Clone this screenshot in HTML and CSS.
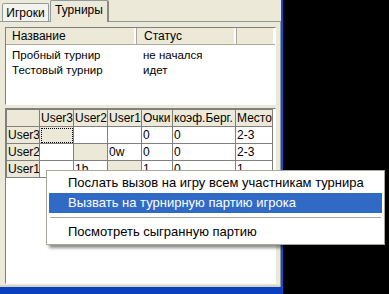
FILE: index.html
```html
<!DOCTYPE html>
<html lang="ru">
<head>
  <meta charset="UTF-8">
  <title>Турниры</title>
  <link rel="stylesheet" href="styles.css">
</head>
<body>
  <div class="window">
    <div class="tabs">
      <span class="tab">Игроки</span>
      <span class="tab active">Турниры</span>
    </div>
    <div class="panel">
      <div class="list">
        <div class="list-head">
          <span class="col-name">Название</span>
          <span class="col-status">Статус</span>
          <span class="col-rest"></span>
        </div>
        <div class="list-row"><span class="col-name">Пробный турнир</span><span class="col-status">не начался</span></div>
        <div class="list-row"><span class="col-name">Тестовый турнир</span><span class="col-status">идет</span></div>
      </div>
      <div class="grid-box">
        <table class="grid">
          <colgroup>
            <col class="w-head"><col class="w-user"><col class="w-user"><col class="w-user">
            <col class="w-score"><col class="w-berg"><col class="w-place">
          </colgroup>
          <tr>
            <th class="corner"></th>
            <th>User3</th><th>User2</th><th>User1</th><th>Очки</th><th>коэф.Берг.</th><th>Место</th>
          </tr>
          <tr>
            <th>User3</th>
            <td class="self focus"></td><td></td><td></td><td>0</td><td>0</td><td>2-3</td>
          </tr>
          <tr>
            <th>User2</th>
            <td></td><td class="self"></td><td>0w</td><td>0</td><td>0</td><td>2-3</td>
          </tr>
          <tr>
            <th>User1</th>
            <td></td><td>1b</td><td class="self"></td><td>1</td><td>0</td><td>1</td>
          </tr>
        </table>
      </div>
    </div>
  </div>
  <div class="menu">
    <div class="item">Послать вызов на игру всем участникам турнира</div>
    <div class="item selected">Вызвать на турнирную партию игрока</div>
    <div class="sep"></div>
    <div class="item">Посмотреть сыгранную партию</div>
  </div>
</body>
</html>
```

FILE: styles.css
```css
body{
  margin: 0;
  width: 389px;
  height: 294px;
  background-color: #000;
  font-family: "Liberation Sans", Arial, sans-serif;
  font-size: 12px;
  overflow: hidden;
  position: relative;
}
.window{
  width: 281px;
  height: 287px;
  background-color: #ECE9D8;
  border-right: 2px solid #0A4FD6;
  border-bottom: 7px solid #0A3FC0;
  box-shadow: inset 0 -2px #D6D2C2;
  display: flex;
  flex-direction: column;
}
/* вкладки */
.tabs{
  display: flex;
  align-items: flex-end;
  height: 21px;
  padding-left: 2px;
  gap: 1px;
}
.tab{
  width: 45px;
  height: 17px;
  border: 1px solid #919B9C;
  border-bottom: none;
  border-radius: 2px 2px 0 0;
  background-color: #F4F3EE;
  line-height: 18px;
  text-align: center;
  color: #000;
}
.tab.active{
  width: 56px;
  height: 21px;
  line-height: 19px;
  background-color: #ECE9D8;
  border-right: 2px solid #8A8A80;
  margin-bottom: -1px;
  position: relative;
}
.panel{
  flex: 1;
  border-top: 1px solid #919B9C;
  border-right: 1px solid #919B9C;
  padding: 5px 3px 3px 5px;
  display: flex;
  flex-direction: column;
  gap: 3px;
}
/* список турниров */
.list{
  height: 76px;
  background-color: #fff;
  border: 1px solid #808080;
  border-right-color: #fff;
  border-bottom-color: #fff;
  margin-right: 1px;
}
.list-head{
  display: flex;
  height: 16px;
  background-color: #ECE9D8;
  border-bottom: 1px solid #ACA899;
  line-height: 16px;
}
.list-head span{
  border-right: 1px solid #ACA899;
  box-shadow: inset -2px 0 #fff;
}
.list-head .col-rest{
  flex: 1;
  border-right: none;
}
.col-name{
  width: 124px;
  padding-left: 6px;
}
.col-status{
  width: 92px;
  padding-left: 7px;
}
.list-row{
  display: flex;
  height: 15px;
  line-height: 15px;
  font-size: 11.5px;
}
.list-head + .list-row{
  margin-top: 3px;
}
/* таблица */
.grid-box{
  flex: 1;
  background-color: #fff;
  border: 1px solid #808080;
  border-right-color: #fff;
  border-bottom-color: #fff;
  margin-right: 1px;
}
.grid{
  border-collapse: collapse;
  table-layout: fixed;
  width: 266px;
  font-size: 12px;
}
.w-head{ width: 33px; }
.w-user{ width: 34px; }
.w-score{ width: 31px; }
.w-berg{ width: 63px; }
.w-place{ width: 37px; }
.grid th, .grid td{
  height: 16px;
  padding: 0 1px;
  border: 1px solid #808080;
  text-align: left;
  font-weight: normal;
  white-space: nowrap;
  overflow: hidden;
}
.grid th{
  background-color: #ECE9D8;
}
.grid td.self{
  background-color: #ECE9D8;
}
.grid td.focus{
  outline: 1px dotted #000;
  outline-offset: -2px;
}
/* контекстное меню */
.menu{
  position: absolute;
  left: 46px;
  top: 170px;
  width: 333px;
  padding: 2px;
  background-color: #fff;
  border: 1px solid #ACA899;
  box-shadow: 3px 3px 3px rgba(0,0,0,0.45);
  font-size: 13px;
}
.item{
  height: 20px;
  line-height: 20px;
  padding-left: 19px;
  color: #000;
  white-space: nowrap;
}
.item.selected{
  background-color: #316AC5;
  color: #fff;
}
.sep{
  height: 1px;
  margin: 4px 1px;
  background-color: #ACA899;
}
```
